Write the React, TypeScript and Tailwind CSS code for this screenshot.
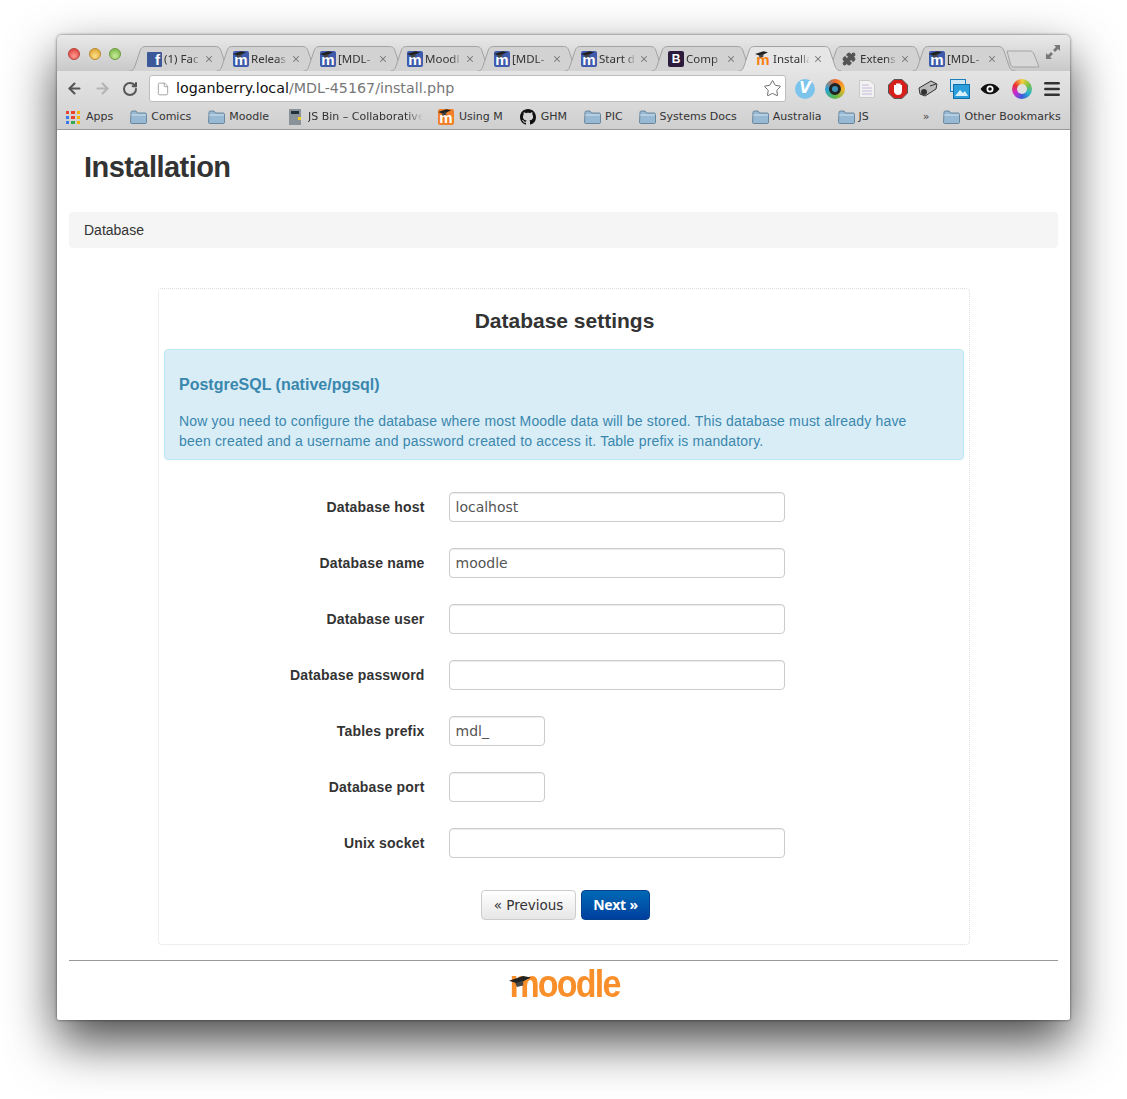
import { ArrowLeft, ArrowRight, RotateCw, Star, X, Puzzle, Menu, File } from "lucide-react";

const uiFont = "font-['DejaVu_Sans',sans-serif]";

function Hat({ className }: { className: string }) {
  return (
    <svg viewBox="0 0 14 7" className={className}>
      <path d="M0 3 L9 0 L14 1 L6 5 Z" fill="#222" />
      <path d="M4 4.500 L9 3 L9 6 L5 7 Z" fill="#444" />
    </svg>
  );
}

function MoodleFav({ bg = "bg-[#3f5bab]", fg = "text-white" }: { bg?: string; fg?: string }) {
  return (
    <span className={`relative flex h-4 w-4 shrink-0 items-end justify-center rounded-[2px] ${bg}`}>
      <span className={`font-['Liberation_Sans',sans-serif] text-[15px] font-bold leading-[15px] ${fg}`}>m</span>
      <Hat className="absolute left-0 top-0 h-[7px] w-[13px]" />
    </span>
  );
}

function Tab({ icon, title, active = false }: { icon: React.ReactNode; title: string; active?: boolean }) {
  return (
    <div className={`relative flex h-[25px] w-[87px] shrink-0 items-center pl-[9px] pt-[1px] ${active ? "z-10" : ""}`}>
      <svg viewBox="0 0 104 25" className="absolute -left-[8px] top-0 h-[25px] w-[104px]">
        <path
          d="M0.5 25 C4 25 5 23 6 20 L11 5 C12 2 13 0.5 17 0.5 L86 0.5 C90 0.5 91 2 92 5 L97 20 C98 23 100 25 103.5 25"
          fill={active ? "#e6e6e6" : "#d2d2d2"}
          stroke="#a3a3a3"
        />
      </svg>
      <span className="relative flex w-[18px] shrink-0 items-center">{icon}</span>
      <span className="relative w-[37px] whitespace-nowrap font-['Noto_Sans',sans-serif] text-[11.5px] text-[#333] [mask-image:linear-gradient(to_right,black_72%,transparent)]">
        {title}
      </span>
      <X className="relative ml-[3px] h-[10px] w-[10px] shrink-0 text-[#777]" strokeWidth={2.5} />
    </div>
  );
}

function Folder({ className = "" }: { className?: string }) {
  return (
    <svg viewBox="0 0 17 14" className={`h-[14px] w-[17px] shrink-0 ${className}`}>
      <path d="M1 2.500 C1 1.500 1.500 1 2.500 1 L6 1 L7.500 3 L15 3 C16 3 16.500 3.500 16.500 4.500 L16.500 12.500 C16.500 13 16 13.500 15.500 13.500 L1.500 13.500 C1 13.500 0.500 13 0.500 12.500 Z" fill="#97b9d3" stroke="#56768f" strokeWidth="0.8" />
      <path d="M1.200 5 L15.800 5" stroke="#d3e3ee" />
    </svg>
  );
}

function Bookmark({ icon, label, ml, gap = "ml-[4px]", fade = false }: { icon: React.ReactNode; label: string; ml: string; gap?: string; fade?: boolean }) {
  return (
    <div className={`flex shrink-0 items-center ${ml}`}>
      {icon}
      <span
        className={`${gap} whitespace-nowrap text-[11px] text-[#333] ${fade ? "w-[115px] [mask-image:linear-gradient(to_right,black_85%,transparent)]" : ""}`}
      >
        {label}
      </span>
    </div>
  );
}

function Field({ label, value = "", small = false }: { label: string; value?: string; small?: boolean }) {
  return (
    <div className="flex h-[30px] items-center">
      <label className="w-[261px] shrink-0 text-right text-[14px] font-bold tracking-[0.18px] text-[#333]">{label}</label>
      <input
        readOnly
        value={value}
        className={`ml-[24px] h-[30px] rounded-[4px] border border-[#ccc] bg-white px-[6px] ${uiFont} text-[14px] text-[#555] shadow-[inset_0_1px_1px_rgba(0,0,0,0.075)] ${small ? "w-[96px]" : "w-[336px]"}`}
      />
    </div>
  );
}

export default function App() {
  const folderIcon = <Folder />;

  return (
    <div className="min-h-[1099px] overflow-hidden bg-white pl-[57px] pt-[35px] font-['Liberation_Sans',sans-serif]">
      <div className="h-[985px] w-[1013px] overflow-hidden rounded-t-[5px] rounded-b-[2px] bg-white shadow-[0_22px_50px_rgba(0,0,0,0.72),0_0_3px_rgba(0,0,0,0.6)]">
        {/* ===== TAB STRIP ===== */}
        <div className={`relative flex h-[36px] items-end overflow-hidden bg-gradient-to-b from-[#e9e9e9] to-[#c9c9c9] ${uiFont}`}>
          <div className="absolute left-[11px] top-[13px] flex gap-[8.5px]">
            <span className="h-[12px] w-[12px] rounded-full border border-[#b5403a] bg-[radial-gradient(circle_at_50%_70%,#ff9a90,#d8322d)]" />
            <span className="h-[12px] w-[12px] rounded-full border border-[#b98a2c] bg-[radial-gradient(circle_at_50%_70%,#ffe08a,#d89b22)]" />
            <span className="h-[12px] w-[12px] rounded-full border border-[#6f9a3c] bg-[radial-gradient(circle_at_50%_70%,#c8ec9a,#6fae3c)]" />
          </div>
          <div className="ml-[80px] flex">
            <Tab
              title="(1) Fac"
              icon={
                <span className="ml-[1px] flex h-[15px] w-[15px] items-end justify-end rounded-[1px] bg-[#3b5998] pr-[2px] font-['Liberation_Sans',sans-serif] text-[15px] font-bold leading-[14px] text-white">
                  f
                </span>
              }
            />
            <Tab title="Releas" icon={<MoodleFav />} />
            <Tab title="[MDL-" icon={<MoodleFav />} />
            <Tab title="Moodl" icon={<MoodleFav />} />
            <Tab title="[MDL-" icon={<MoodleFav />} />
            <Tab title="Start d" icon={<MoodleFav />} />
            <Tab
              title="Comp"
              icon={
                <span className="flex h-4 w-4 items-center justify-center rounded-[2px] bg-[#2d1b3d] font-['Liberation_Sans',sans-serif] text-[12px] font-bold text-white">
                  B
                </span>
              }
            />
            <Tab active title="Installa" icon={<MoodleFav bg="bg-transparent" fg="text-[#f98012]" />} />
            <Tab title="Extens" icon={<Puzzle className="h-[14px] w-[14px] fill-[#555] text-[#555]" />} />
            <Tab title="[MDL-" icon={<MoodleFav />} />
          </div>
          <svg viewBox="0 0 34 18" className="relative -ml-[1px] mb-[3px] h-[18px] w-[34px]">
            <path d="M1 1 L24 1 C26 1 27 2 28 4 L33 17 L8 17 C6 17 5 16 4.500 14 Z" fill="#d8d8d8" stroke="#a3a3a3" />
          </svg>
          <svg viewBox="0 0 16 16" className="absolute right-[9px] top-[9px] h-[16px] w-[16px] text-[#777]" fill="currentColor">
            <path d="M9 1 L15 1 L15 7 L13 5 L10 8 L8 6 L11 3 Z" />
            <path d="M1 9 L1 15 L7 15 L5 13 L8 10 L6 8 L3 11 Z" />
          </svg>
        </div>

        {/* ===== ADDRESS ROW ===== */}
        <div className={`flex h-[31px] items-center bg-gradient-to-b from-[#e4e4e4] to-[#dadada] pt-[4px] ${uiFont}`}>
          <ArrowLeft className="ml-[9px] h-[17px] w-[17px] text-[#555]" strokeWidth={3} />
          <ArrowRight className="ml-[11px] h-[17px] w-[17px] text-[#b4b4b4]" strokeWidth={3} />
          <RotateCw className="ml-[11px] h-[16px] w-[16px] text-[#555]" strokeWidth={3} />
          <div className="ml-[11px] flex h-[27px] w-[637px] items-center rounded-[3px] border border-[#bdbdbd] bg-white pl-[6px]">
            <File className="h-[14px] w-[14px] text-[#999]" strokeWidth={1.5} />
            <span className="ml-[6px] whitespace-nowrap text-[14.25px] text-[#111]">
              loganberry.local<span className="text-[#777]">/MDL-45167/install.php</span>
            </span>
            <Star className="ml-auto mr-[3px] h-[19px] w-[19px] text-[#666]" strokeWidth={1.2} />
          </div>
          <div className="ml-[9px] flex h-5 w-5 items-center justify-center rounded-full bg-[#7cc4ec] text-[15px] font-bold italic leading-none text-white">V</div>
          <div className="ml-[10px] h-5 w-5 rounded-full bg-[conic-gradient(#f2672a,#f5b62a,#58b947,#2aa3d8,#f2672a)] p-[4px]">
            <div className="h-full w-full rounded-full border-[3px] border-[#222] bg-[#3c8fb5]" />
          </div>
          <svg viewBox="0 0 16 18" className="ml-[14px] h-[18px] w-[16px]">
            <path d="M0.500 0.500 L11 0.500 L15.500 5 L15.500 17.500 L0.500 17.500 Z" fill="#f2f2f2" stroke="#c9c9c9" />
            <path d="M3 5 H10 M3 8 H13 M3 11 H13 M3 14 H13" stroke="#c5b8d8" />
          </svg>
          <svg viewBox="0 0 20 20" className="ml-[13px] h-[20px] w-[20px]">
            <path d="M6 0.500 L14 0.500 L19.500 6 L19.500 14 L14 19.500 L6 19.500 L0.500 14 L0.500 6 Z" fill="#d5201c" stroke="#555" />
            <path d="M6 10 V6 H8 V4.500 H12.500 V6 H14 V12 C14 15 12 16 10 16 C8 16 7 15 6 13 Z" fill="#fff" />
          </svg>
          <svg viewBox="0 0 20 18" className="ml-[10px] h-[18px] w-[20px]">
            <path d="M1 8 L13 1 L19 4 L18 9 L7 16 L2 14 Z" fill="#bbb" stroke="#333" />
            <circle cx="6" cy="12" r="3" fill="#333" />
            <path d="M12 6 L18 4" stroke="#333" />
          </svg>
          <svg viewBox="0 0 20 20" className="ml-[12px] h-[20px] w-[20px]">
            <rect x="0.500" y="0.500" width="15" height="12" fill="#cfe6f5" stroke="#1b7fbd" />
            <rect x="3.500" y="5.500" width="16" height="14" fill="#2a9fdb" stroke="#0f6fa8" />
            <path d="M5 17 L10 11 L13 14 L15 12 L18 17 Z" fill="#d8f0fb" />
          </svg>
          <svg viewBox="0 0 20 12" className="ml-[10px] h-[12px] w-[20px]">
            <path d="M0.500 6 C5 -1 15 -1 19.500 6 C15 13 5 13 0.500 6 Z" fill="#111" />
            <circle cx="10" cy="6" r="3.500" fill="#fff" />
            <circle cx="10" cy="6" r="1.800" fill="#111" />
          </svg>
          <div className="ml-[12px] h-5 w-5 rounded-full bg-[conic-gradient(#f4d03f,#7ac143,#2ab7ca,#3b5bdb,#c92bd1,#e8322e,#f4d03f)] p-[5px]">
            <div className="h-full w-full rounded-full bg-[#e0e0e0]" />
          </div>
          <Menu className="ml-[10px] h-5 w-5 text-[#333]" strokeWidth={3} />
        </div>

        {/* ===== BOOKMARKS ROW ===== */}
        <div className={`flex h-[28px] items-center border-b border-[#9a9a9a] bg-gradient-to-b from-[#dadada] to-[#cfcfcf] pt-[3px] ${uiFont}`}>
          <Bookmark
            ml="ml-[9px]"
            gap="ml-[6px]"
            label="Apps"
            icon={
              <div className="grid h-[13px] w-[14px] grid-cols-3 gap-[2px]">
                <span className="bg-[#e8432e]" />
                <span className="bg-[#e8432e]" />
                <span className="bg-[#f5b400]" />
                <span className="bg-[#3b78e7]" />
                <span className="bg-[#e8432e]" />
                <span className="bg-[#f5b400]" />
                <span className="bg-[#3b78e7]" />
                <span className="bg-[#34a853]" />
                <span className="bg-[#f5b400]" />
              </div>
            }
          />
          <Bookmark ml="ml-[17px]" label="Comics" icon={folderIcon} />
          <Bookmark ml="ml-[17px]" label="Moodle" icon={folderIcon} />
          <Bookmark
            ml="ml-[20px]"
            gap="ml-[7px]"
            fade
            label="JS Bin – Collaborative"
            icon={
              <div className="flex h-[16px] w-[12px] flex-col items-center gap-[3px] bg-[#8a9299] pt-[2px]">
                <span className="h-[3px] w-[8px] bg-[#20303c]" />
                <span className="h-[3px] w-[3px] self-end bg-[#f0d020]" />
              </div>
            }
          />
          <Bookmark ml="ml-[15px]" gap="ml-[5px]" label="Using M" icon={<MoodleFav bg="bg-[#f0812a]" />} />
          <Bookmark
            ml="ml-[17px]"
            gap="ml-[5px]"
            label="GHM"
            icon={
              <svg viewBox="0 0 16 16" className="h-[16px] w-[16px]" fill="#111">
                <path d="M8 0C3.580 0 0 3.580 0 8c0 3.540 2.290 6.530 5.470 7.590.4.070.55-.17.55-.38 0-.19-.01-.82-.01-1.490-2.010.37-2.530-.49-2.690-.94-.09-.23-.48-.94-.82-1.130-.28-.15-.68-.52-.01-.53.63-.01 1.080.58 1.230.82.720 1.210 1.870.87 2.330.66.070-.52.280-.87.510-1.070-1.780-.2-3.640-.89-3.640-3.950 0-.87.310-1.590.82-2.150-.08-.2-.36-1.020.08-2.120 0 0 .67-.21 2.200.82.640-.18 1.320-.27 2-.27s1.360.09 2 .27c1.530-1.040 2.200-.82 2.200-.82.440 1.100.16 1.920.08 2.120.51.560.82 1.270.82 2.150 0 3.070-1.870 3.750-3.650 3.950.290.250.540.730.540 1.480 0 1.070-.01 1.930-.01 2.200 0 .21.150.46.550.38A8.010 8.010 0 0 0 16 8c0-4.420-3.580-8-8-8z" />
              </svg>
            }
          />
          <Bookmark ml="ml-[17px]" label="PIC" icon={folderIcon} />
          <Bookmark ml="ml-[16px]" label="Systems Docs" icon={folderIcon} />
          <Bookmark ml="ml-[15px]" label="Australia" icon={folderIcon} />
          <Bookmark ml="ml-[16px]" label="JS" icon={folderIcon} />
          <span className="ml-[54px] text-[11px] text-[#444]">»</span>
          <Bookmark ml="ml-[14px]" label="Other Bookmarks" icon={folderIcon} />
        </div>

        {/* ===== PAGE ===== */}
        <div className="px-[12px] pt-[19px]">
          <h1 className="pl-[15px] text-[29px] font-bold leading-[36px] tracking-[-0.55px] text-[#333]">Installation</h1>
          <div className="mt-[27px] flex h-[36px] items-center rounded-[4px] bg-[#f5f5f5] pl-[15px] text-[14px] text-[#333]">Database</div>

          <div className="mx-auto mt-[40px] h-[657px] w-[812px] rounded-[4px] border border-dotted border-[#ddd] px-[5px]">
            <h2 className="pl-[2px] pt-[18px] text-center text-[21px] font-bold leading-[27px] text-[#333]">Database settings</h2>
            <div className="mt-[15px] h-[111px] rounded-[4px] border border-[#bce8f1] bg-[#d9edf7] pl-[14.5px] pr-[30px] pt-[24px] text-[#3a87ad]">
              <h3 className="text-[16px] font-bold leading-[22px]">PostgreSQL (native/pgsql)</h3>
              <p className="mt-[15px] text-[14px] leading-[20px] tracking-[0.18px]">
                Now you need to configure the database where most Moodle data will be stored. This database must already have been created and a username and password created to access it. Table prefix is mandatory.
              </p>
            </div>

            <form className="mt-[32px] flex flex-col gap-[26px]">
              <Field label="Database host" value="localhost" />
              <Field label="Database name" value="moodle" />
              <Field label="Database user" />
              <Field label="Database password" />
              <Field label="Tables prefix" value="mdl_" small />
              <Field label="Database port" small />
              <Field label="Unix socket" />
            </form>

            <div className="mt-[32px] flex justify-center gap-[5px] pl-[4px]">
              <button className={`h-[30px] w-[95px] rounded-[4px] border border-[#ccc] bg-gradient-to-b from-white to-[#e6e6e6] ${uiFont} text-[13.5px] text-[#333]`}>« Previous</button>
              <button className="h-[30px] w-[69px] rounded-[4px] border border-[#04408c] bg-gradient-to-b from-[#0069b5] to-[#003f9e] pb-[2px] font-['Noto_Sans',sans-serif] text-[14px] font-bold tracking-[-0.2px] text-white">Next »</button>
            </div>
          </div>

          <div className="mt-[15px] border-t border-[#999]" />
          <div className="relative mx-auto mt-[2px] h-[44px] w-[112px] text-right">
            <span className="inline-block origin-[50%_33px] scale-y-[1.15] font-['Liberation_Sans',sans-serif] text-[34px] font-bold leading-[44px] tracking-[-1.8px] text-[#f98f2a]">moodle</span>
            <Hat className="absolute left-0 top-[13px] h-[11px] w-[24px]" />
          </div>
        </div>
      </div>
    </div>
  );
}
